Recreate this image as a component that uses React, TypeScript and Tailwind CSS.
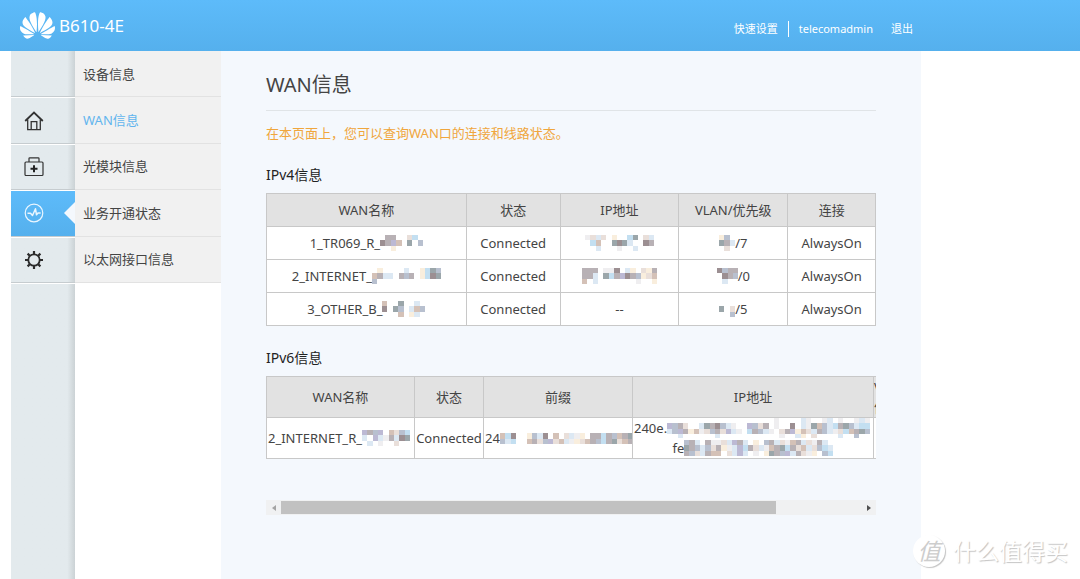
import { useRef } from "react";
import { SiHuawei } from "react-icons/si";

const palette: Record<string, string> = {
  a: "#b8b1b5",
  b: "#bcb9d4",
  c: "#d4c1b7",
  d: "#dce8f3",
  e: "#f9eedd",
  f: "#9ba6aa",
  g: "#e9dfda",
  h: "#c3dff1",
  i: "#9c8f92",
  j: "#b8c0cf",
  k: "#efeef0",
};

function Mosaic({ rows }: { rows: string[] }) {
  const cols = rows[0].length;
  return (
    <svg
      aria-hidden="true"
      className="inline-block shrink-0"
      width={Math.round((cols * 16) / 3)}
      height={Math.round((rows.length * 16) / 3)}
      viewBox={`0 0 ${cols} ${rows.length}`}
      preserveAspectRatio="none"
      shapeRendering="crispEdges"
    >
      {rows.flatMap((row, y) =>
        [...row].map((c, x) =>
          palette[c] ? <rect key={`${x}-${y}`} x={x} y={y} width="1" height="1" fill={palette[c]} /> : null,
        ),
      )}
    </svg>
  );
}

function HomeIcon() {
  return (
    <svg width="20" height="20" viewBox="0 0 20 20" fill="none" stroke="#333" strokeWidth="1.3">
      <path d="M1.2 10 10 1.6 18.8 10" strokeWidth="1.8" />
      <path d="M3.7 8.5v10.2h12.6V8.5M7.2 18.5v-7.8h5.6v7.8" />
    </svg>
  );
}

function KitIcon() {
  return (
    <svg width="20" height="20" viewBox="0 0 20 20" fill="none" stroke="#333" strokeWidth="1.2">
      <rect x="1" y="5" width="18" height="13.5" rx="1" />
      <path d="M5 5V1.6c0-.5.3-.8.8-.8h8.4c.5 0 .8.3.8.8V5" />
      <path d="M10 8.2v7M6.5 11.7h7" stroke="#222" strokeWidth="2" />
    </svg>
  );
}

function PulseIcon() {
  return (
    <svg width="20" height="20" viewBox="0 0 20 20" fill="none" stroke="#eaf6ff">
      <circle cx="10" cy="10" r="8.8" strokeWidth="1.2" />
      <path d="M3.5 10.2h3l2 2.3 3-6.7 1 6 1.5-1.8h2.7" strokeWidth="1.5" strokeLinejoin="round" />
    </svg>
  );
}

function GearIcon() {
  return (
    <svg width="20" height="20" viewBox="0 0 20 20" fill="none" stroke="#2b2b2b">
      <circle cx="10" cy="10" r="5.7" strokeWidth="1.8" />
      <path
        d="M10 1v3M10 16v3M1 10h3M16 10h3M3.6 3.6l2.2 2.2M14.2 14.2l2.2 2.2M16.4 3.6l-2.2 2.2M5.8 14.2l-2.2 2.2"
        strokeWidth="2.2"
      />
    </svg>
  );
}

const sections = [
  { label: "首页", Icon: HomeIcon },
  { label: "诊断", Icon: KitIcon },
  { label: "状态", Icon: PulseIcon, active: true },
  { label: "设置", Icon: GearIcon },
];

const pages = ["设备信息", "WAN信息", "光模块信息", "业务开通状态", "以太网接口信息"];

const ipv4 = [
  {
    name: "1_TR069_R_",
    nameMask: [".aa..gh.", "iabc.f.j", "..e....."],
    ip: ["kgdg.e..hf.gd", ".hc..fifd..ia", "..d...k..d..."],
    vlan: ["ej.", "fad", ".g."],
    priority: "/7",
  },
  {
    name: "2_INTERNET_",
    nameMask: [".e....d..ehfj", "cadd.aja.ehif", "j............"],
    ip: ["aaa.kki.de.gea", "aad.fhabiajegc", "c.d.......k..e"],
    vlan: ["ijaa", ".iaj", ".d.."],
    priority: "/0",
  },
  {
    name: "3_OTHER_B_",
    nameMask: ["c..f..d.", "i.fj.dcj", "...c.ed."],
    ip: null,
    vlan: ["...", "f.g", "..j"],
    priority: "/5",
  },
];

const cell = "border border-[#c8c8c8] p-0 text-center font-normal";

export default function App() {
  const scroller = useRef<HTMLDivElement>(null);
  const scroll = (left: number) => scroller.current?.scrollBy({ left });

  return (
    <div className="relative flex min-h-screen flex-col overflow-hidden bg-white font-['Noto_Sans','Noto_Sans_CJK_SC',sans-serif] text-[13px] leading-5 text-[#444]">
      <header className="h-[51px] bg-linear-to-b from-[#5dbbfa] to-[#55b0ed] text-white">
        <div className="flex h-full max-w-[921px] items-center justify-between pr-2 pl-5">
          <div className="flex items-center gap-1">
            <SiHuawei size={35} />
            <span className="text-[17px]">B610-4E</span>
          </div>
          <nav className="flex items-center pt-1.5 text-[11px] leading-4">
            <a href="#setup" className="border-r border-white pr-2.5">快速设置</a>
            <a href="#account" className="pl-2.5">telecomadmin</a>
            <a href="#logout" className="pl-4.5">退出</a>
          </nav>
        </div>
      </header>

      <div className="ml-[11px] flex flex-1">
        <nav className="w-16 shrink-0 bg-linear-to-r from-[#e3eaed] from-88% to-[#cbd2d5]">
          <div className="grid h-[232px] grid-rows-5">
            <div className="border-b border-[#c6cccf]" />
            {sections.map(({ label, Icon, active }) => (
              <a
                key={label}
                href={`#${label}`}
                aria-label={label}
                className={
                  active
                    ? "relative flex items-center border-t border-b border-t-white border-b-[#c6cccf] bg-linear-to-b from-[#5dbbfa] to-[#55b0ed] pl-[13px]"
                    : "flex items-center border-t border-b border-t-white border-b-[#c6cccf] pl-[13px]"
                }
              >
                <Icon />
                {active && (
                  <svg className="absolute top-1/2 right-0 -translate-y-1/2" width="11" height="22" viewBox="0 0 11 22">
                    <path d="M11 0v22L0 11z" fill="#f4f8fd" />
                  </svg>
                )}
              </a>
            ))}
          </div>
          <div className="border-t border-white" />
        </nav>

        <nav className="w-[146px] shrink-0">
          <div className="grid h-[232px] grid-rows-5 bg-[#f1f1f1]">
            {pages.map((page) => (
              <a
                key={page}
                href={`#${page}`}
                className={
                  page === "WAN信息"
                    ? "flex items-center border-b border-[#e2e2e2] pl-2 text-[#62b5ee]"
                    : "flex items-center border-b border-[#e2e2e2] pl-2"
                }
              >
                {page}
              </a>
            ))}
          </div>
        </nav>

        <main className="max-w-[700px] min-w-0 flex-1 bg-[#f4f8fd] pt-5 pr-[45px] pl-[45px]">
          <h1 className="border-b border-[#e0e4e7] pb-[11px] text-[20px] leading-7">WAN信息</h1>
          <p className="mt-3 text-[#f0a63c]">在本页面上，您可以查询WAN口的连接和线路状态。</p>

          <h2 className="mt-5 text-[14px] leading-6 text-[#222]">IPv4信息</h2>
          <table className="mt-1.5 w-full table-fixed border-collapse bg-white">
            <colgroup>
              <col className="w-[32.8%]" />
              <col className="w-[15.4%]" />
              <col className="w-[19.5%]" />
              <col className="w-[17.9%]" />
              <col className="w-[14.4%]" />
            </colgroup>
            <thead className="bg-[#e2e2e2]">
              <tr className="h-[33px]">
                {["WAN名称", "状态", "IP地址", "VLAN/优先级", "连接"].map((h) => (
                  <th key={h} className={cell}>{h}</th>
                ))}
              </tr>
            </thead>
            <tbody>
              {ipv4.map((row) => (
                <tr key={row.name} className="h-[33px]">
                  <td className={cell}>
                    <div className="flex items-center justify-center">{row.name}<Mosaic rows={row.nameMask} /></div>
                  </td>
                  <td className={cell}>Connected</td>
                  <td className={cell}>
                    {row.ip ? <div className="flex justify-center"><Mosaic rows={row.ip} /></div> : "--"}
                  </td>
                  <td className={cell}>
                    <div className="flex items-center justify-center"><Mosaic rows={row.vlan} />{row.priority}</div>
                  </td>
                  <td className={cell}>AlwaysOn</td>
                </tr>
              ))}
            </tbody>
          </table>

          <h2 className="mt-5 text-[14px] leading-6 text-[#222]">IPv6信息</h2>
          <div ref={scroller} className="mt-1.5 overflow-hidden">
            <table className="w-[716px] table-fixed border-collapse bg-white">
              <colgroup>
                <col className="w-[148px]" />
                <col className="w-[69px]" />
                <col className="w-[149px]" />
                <col className="w-[241px]" />
                <col />
              </colgroup>
              <thead className="bg-[#e2e2e2]">
                <tr className="h-[41px]">
                  {["WAN名称", "状态", "前缀", "IP地址"].map((h) => (
                    <th key={h} className={cell}>{h}</th>
                  ))}
                  <th className="border border-[#c8c8c8] p-0 text-left font-normal">VLAN/<br />优先级</th>
                </tr>
              </thead>
              <tbody>
                <tr className="h-[41px]">
                  <td className={cell}>
                    <div className="flex items-center overflow-hidden pl-px">
                      2_INTERNET_R_<Mosaic rows={["bajb.cgjh", "d.bdkadif", ".d.k..g.."]} />
                    </div>
                  </td>
                  <td className={cell}>Connected</td>
                  <td className={cell}>
                    <div className="flex items-center overflow-hidden pl-px">
                      24<Mosaic rows={["chi..ejdi.c.gdke.aahajcaf", "jdh..cagjbgcdkegcajhafgca"]} />
                    </div>
                  </td>
                  <td className={cell}>
                    <div className="flex h-5 items-center overflow-hidden pl-px">
                      240e.
                      <Mosaic
                        rows={[
                          "....................k....dk..kd.k..kdk",
                          "bjag..dfaijdk..bjga.k..i.dkfcjdhafjdhh",
                          "djbaeckgjagbdk.hajdk.gabecgdajdkghcafj",
                          "..d......d...........k..de.g....d..j..",
                        ]}
                      />
                    </div>
                    <div className="flex h-5 items-center justify-center">
                      fe
                      <Mosaic
                        rows={[
                          "jad.akkgdbad.e.jadgkcadgkad.",
                          "fajdjgaekdbhagdkcafhagcdgjhd",
                          "ajgdacc.gdbd.k.efajbdagke.jh",
                        ]}
                      />
                    </div>
                  </td>
                  <td className={cell} />
                </tr>
              </tbody>
            </table>
          </div>

          <div className="mt-[41px] flex h-[15px] items-center bg-[#f0f1f2]">
            <button type="button" aria-label="向左滚动" onClick={() => scroll(-40)} className="flex h-full w-[15px] items-center justify-center">
              <svg width="4" height="6" viewBox="0 0 4 6"><path d="M4 0v6L0 3z" fill="#a3a3a3" /></svg>
            </button>
            <div className="h-[13px] flex-1">
              <div className="h-full w-[85.4%] bg-[#c1c1c1]" />
            </div>
            <button type="button" aria-label="向右滚动" onClick={() => scroll(40)} className="flex h-full w-[15px] items-center justify-center">
              <svg width="4" height="6" viewBox="0 0 4 6"><path d="M0 0v6l4-3z" fill="#505050" /></svg>
            </button>
          </div>
        </main>
      </div>

      <div className="absolute right-3 bottom-3 flex items-center gap-2 text-[23px] leading-8 text-white [text-shadow:1px_1px_1px_#c4c4c4]">
        <span className="flex size-8 items-center justify-center rounded-full bg-white text-[#cdcdcd] italic shadow-[1px_1px_1px_#c4c4c4] [text-shadow:none]">
          值
        </span>
        <span>什么值得买</span>
      </div>
    </div>
  );
}
